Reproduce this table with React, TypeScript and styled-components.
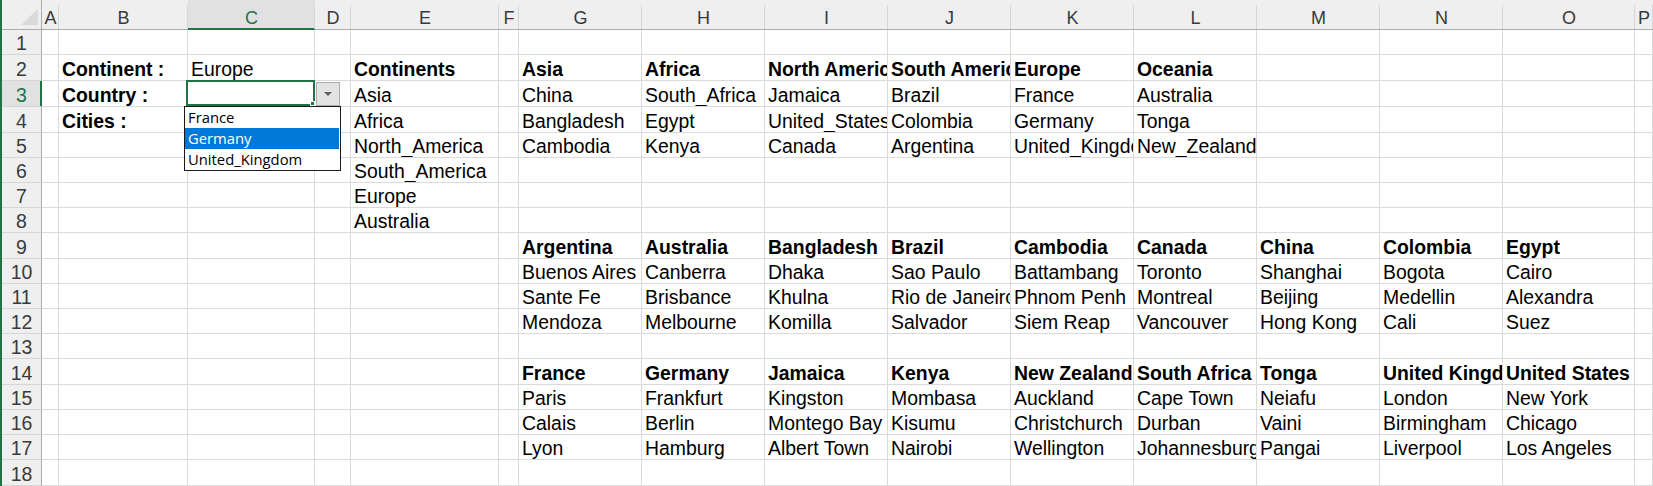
import React from 'react';
import styled, { createGlobalStyle } from 'styled-components';

const GlobalStyle = createGlobalStyle`
  html, body {
    margin: 0;
    padding: 0;
    background: #ffffff;
  }
  body {
    font-family: "Liberation Sans", Arial, sans-serif;
    overflow: hidden;
  }
  * { box-sizing: border-box; }
`;

const GREEN = '#217346';

type Column = { id: string; width: number };

const COLUMNS: Column[] = [
  { id: 'A', width: 17 },
  { id: 'B', width: 129 },
  { id: 'C', width: 127 },
  { id: 'D', width: 36 },
  { id: 'E', width: 148 },
  { id: 'F', width: 20 },
  { id: 'G', width: 123 },
  { id: 'H', width: 123 },
  { id: 'I', width: 123 },
  { id: 'J', width: 123 },
  { id: 'K', width: 123 },
  { id: 'L', width: 123 },
  { id: 'M', width: 123 },
  { id: 'N', width: 123 },
  { id: 'O', width: 132 },
  { id: 'P', width: 0 },
];

const ROW_HEIGHTS = [25, 26, 26, 26, 25, 25, 25, 25, 26, 25, 25, 25, 25, 26, 25, 25, 25, 26];

const ACTIVE_COL = 'C';
const ACTIVE_ROW = 3;

type Entry = { text: string; bold?: boolean };
const DATA: Record<string, Entry> = {};
const LETTERS = COLUMNS.map((c) => c.id);

const put = (row: number, start: string, values: string[], bold = false) => {
  const s = LETTERS.indexOf(start);
  values.forEach((text, i) => {
    DATA[`${LETTERS[s + i]}${row}`] = { text, bold };
  });
};

put(2, 'B', ['Continent :'], true);
put(2, 'C', ['Europe']);
put(2, 'E', ['Continents'], true);
put(2, 'G', ['Asia', 'Africa', 'North America', 'South America', 'Europe', 'Oceania'], true);
put(3, 'B', ['Country :'], true);
put(3, 'E', ['Asia']);
put(3, 'G', ['China', 'South_Africa', 'Jamaica', 'Brazil', 'France', 'Australia']);
put(4, 'B', ['Cities :'], true);
put(4, 'E', ['Africa']);
put(4, 'G', ['Bangladesh', 'Egypt', 'United_States', 'Colombia', 'Germany', 'Tonga']);
put(5, 'E', ['North_America']);
put(5, 'G', ['Cambodia', 'Kenya', 'Canada', 'Argentina', 'United_Kingdom', 'New_Zealand']);
put(6, 'E', ['South_America']);
put(7, 'E', ['Europe']);
put(8, 'E', ['Australia']);
put(9, 'G', ['Argentina', 'Australia', 'Bangladesh', 'Brazil', 'Cambodia', 'Canada', 'China', 'Colombia', 'Egypt'], true);
put(10, 'G', ['Buenos Aires', 'Canberra', 'Dhaka', 'Sao Paulo', 'Battambang', 'Toronto', 'Shanghai', 'Bogota', 'Cairo']);
put(11, 'G', ['Sante Fe', 'Brisbance', 'Khulna', 'Rio de Janeiro', 'Phnom Penh', 'Montreal', 'Beijing', 'Medellin', 'Alexandra']);
put(12, 'G', ['Mendoza', 'Melbourne', 'Komilla', 'Salvador', 'Siem Reap', 'Vancouver', 'Hong Kong', 'Cali', 'Suez']);
put(14, 'G', ['France', 'Germany', 'Jamaica', 'Kenya', 'New Zealand', 'South Africa', 'Tonga', 'United Kingdom', 'United States'], true);
put(15, 'G', ['Paris', 'Frankfurt', 'Kingston', 'Mombasa', 'Auckland', 'Cape Town', 'Neiafu', 'London', 'New York']);
put(16, 'G', ['Calais', 'Berlin', 'Montego Bay', 'Kisumu', 'Christchurch', 'Durban', 'Vaini', 'Birmingham', 'Chicago']);
put(17, 'G', ['Lyon', 'Hamburg', 'Albert Town', 'Nairobi', 'Wellington', 'Johannesburg', 'Pangai', 'Liverpool', 'Los Angeles']);

const LIST_ITEMS = ['France', 'Germany', 'United_Kingdom'];
const HIGHLIGHTED = 'Germany';

/* ---------- styled parts ---------- */

const Window = styled.div`
  display: flex;
  width: 1653px;
  height: 486px;
  border-left: 2px solid ${GREEN};
  background: #ffffff;
  overflow: hidden;
`;

const Sheet = styled.div`
  flex: 1;
  display: grid;
  grid-template-columns: 40px ${COLUMNS.map((c) => (c.width ? `${c.width}px` : '1fr')).join(' ')};
  grid-template-rows: 30px ${ROW_HEIGHTS.map((h) => `${h}px`).join(' ')};
`;

const Corner = styled.div`
  display: flex;
  justify-content: flex-end;
  align-items: flex-end;
  padding: 0 3px 4px 0;
  background: #efefef;
  border-right: 1px solid #ababab;
  border-bottom: 1px solid #ababab;
`;

const CornerTriangle = styled.span`
  width: 17px;
  height: 16px;
  background: #dadada;
  clip-path: polygon(100% 0, 100% 100%, 0 100%);
`;

const ColHeader = styled.div<{ $active?: boolean }>`
  position: relative;
  display: flex;
  justify-content: center;
  align-items: flex-end;
  min-width: 0;
  overflow: hidden;
  background: ${(p) => (p.$active ? '#e1e1e1' : '#efefef')};
  color: ${(p) => (p.$active ? GREEN : '#3a3a3a')};
  border-bottom: 1px solid ${(p) => (p.$active ? GREEN : '#ababab')};
  box-shadow: ${(p) => (p.$active ? `inset 0 -1px 0 ${GREEN}` : 'none')};
  font-size: 18px;
  line-height: 1.15;

  &::after {
    content: '';
    position: absolute;
    right: 0;
    top: 5px;
    bottom: 0;
    width: 1px;
    background: #d6d6d6;
  }
`;

const RowHeader = styled.div<{ $active?: boolean }>`
  display: flex;
  justify-content: center;
  align-items: flex-end;
  background: ${(p) => (p.$active ? '#e1e1e1' : '#efefef')};
  color: ${(p) => (p.$active ? GREEN : '#3a3a3a')};
  border-right: 1px solid ${(p) => (p.$active ? GREEN : '#ababab')};
  border-bottom: 1px solid #d6d6d6;
  box-shadow: ${(p) => (p.$active ? `inset -1px 0 0 ${GREEN}` : 'none')};
  font-size: 19.5px;
  line-height: 1.15;
`;

const Cell = styled.div<{ $bold?: boolean; $active?: boolean }>`
  position: ${(p) => (p.$active ? 'relative' : 'static')};
  z-index: ${(p) => (p.$active ? 5 : 'auto')};
  display: flex;
  align-items: flex-end;
  min-width: 0;
  padding-left: 3px;
  border-right: 1px solid #dadada;
  border-bottom: 1px solid #dadada;
  overflow: ${(p) => (p.$active ? 'visible' : 'hidden')};
  white-space: nowrap;
  color: #000000;
  font-size: 19.4px;
  line-height: 1.15;
  font-weight: ${(p) => (p.$bold ? 700 : 400)};
`;

const SelectionFrame = styled.div`
  position: absolute;
  left: -2px;
  top: -1px;
  width: 129px;
  height: 26px;
  border: 2px solid ${GREEN};
  pointer-events: none;
`;

const FillHandle = styled.span`
  position: absolute;
  right: -2px;
  bottom: -2px;
  width: 5px;
  height: 5px;
  background: ${GREEN};
  border: 1px solid #ffffff;
`;

const DropButton = styled.div`
  position: absolute;
  left: 128px;
  top: 1px;
  width: 24px;
  height: 24px;
  display: flex;
  align-items: center;
  justify-content: center;
  background: #e3e3e3;
  border: 1px solid #adadad;
`;

const Arrow = styled.span`
  width: 0;
  height: 0;
  border-left: 4px solid transparent;
  border-right: 4px solid transparent;
  border-top: 4px solid #606060;
`;

const DropList = styled.ul`
  position: absolute;
  left: -4px;
  top: 25px;
  width: 157px;
  margin: 0;
  padding: 0;
  list-style: none;
  background: #ffffff;
  border: 1px solid #1a1a1a;
  font-family: "Open Sans", "Noto Sans", sans-serif;
  font-size: 14.8px;
  font-weight: 400;
`;

const DropItem = styled.li<{ $selected?: boolean }>`
  height: 21px;
  line-height: 21px;
  margin-right: 1px;
  padding-left: 3px;
  background: ${(p) => (p.$selected ? '#0078d7' : 'transparent')};
  color: ${(p) => (p.$selected ? '#ffffff' : '#000000')};
`;

/* ---------- components ---------- */

const Dropdown: React.FC = () => (
  <>
    <SelectionFrame>
      <FillHandle />
    </SelectionFrame>
    <DropButton>
      <Arrow />
    </DropButton>
    <DropList>
      {LIST_ITEMS.map((item) => (
        <DropItem key={item} $selected={item === HIGHLIGHTED}>
          {item}
        </DropItem>
      ))}
    </DropList>
  </>
);

export default function App() {
  const rows = ROW_HEIGHTS.map((_, i) => i + 1);
  return (
    <>
      <GlobalStyle />
      <Window>
        <Sheet>
          <Corner>
            <CornerTriangle />
          </Corner>
          {COLUMNS.map((c) => (
            <ColHeader key={c.id} $active={c.id === ACTIVE_COL}>
              {c.id}
            </ColHeader>
          ))}
          {rows.map((r) => (
            <React.Fragment key={r}>
              <RowHeader $active={r === ACTIVE_ROW}>{r}</RowHeader>
              {COLUMNS.map((c) => {
                const ref = `${c.id}${r}`;
                const entry = DATA[ref];
                const active = c.id === ACTIVE_COL && r === ACTIVE_ROW;
                return (
                  <Cell key={ref} $bold={entry?.bold} $active={active}>
                    {entry?.text}
                    {active && <Dropdown />}
                  </Cell>
                );
              })}
            </React.Fragment>
          ))}
        </Sheet>
      </Window>
    </>
  );
}
